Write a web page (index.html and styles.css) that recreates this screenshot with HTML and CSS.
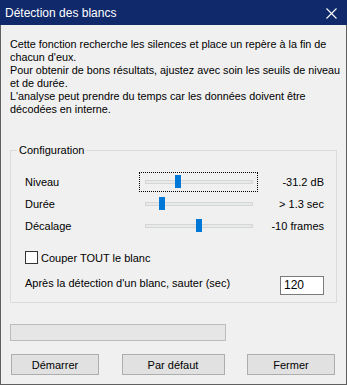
FILE: index.html
```html
<!DOCTYPE html>
<html lang="fr">
<head>
  <meta charset="UTF-8" />
  <title>Détection des blancs</title>
  <link rel="stylesheet" href="styles.css">
</head>
<body>
  <div class="window">
    <div class="titlebar">
      <span class="title">Détection des blancs</span>
      <svg class="close" width="11" height="11" viewBox="0 0 11 11">
        <path d="M0.5 0.5L10.5 10.5M10.5 0.5L0.5 10.5" stroke="#fff" stroke-width="1.1" fill="none"/>
      </svg>
    </div>

    <div class="client">
      <p class="intro">
        Cette fonction recherche les silences et place un repère à la fin de<br>
        chacun d'eux.<br>
        Pour obtenir de bons résultats, ajustez avec soin les seuils de niveau<br>
        et de durée.<br>
        L'analyse peut prendre du temps car les données doivent être<br>
        décodées en interne.
      </p>

      <fieldset class="group">
        <legend>Configuration</legend>

        <div class="sliders">
          <span class="label">Niveau</span>
          <div class="slider focus"><div class="track"><span class="thumb" style="left:29px"></span></div></div>
          <span class="value">-31.2 dB</span>

          <span class="label">Durée</span>
          <div class="slider"><div class="track"><span class="thumb" style="left:13px"></span></div></div>
          <span class="value">&gt; 1.3 sec</span>

          <span class="label">Décalage</span>
          <div class="slider"><div class="track"><span class="thumb" style="left:50px"></span></div></div>
          <span class="value">-10 frames</span>
        </div>

        <label class="check"><span class="box"></span>Couper TOUT le blanc</label>

        <div class="skip">
          <span class="skip-label">Après la détection d'un blanc, sauter (sec)</span>
          <span class="field">120</span>
        </div>
      </fieldset>

      <div class="progress"></div>

      <div class="buttons">
        <button class="btn">Démarrer</button>
        <button class="btn wide">Par défaut</button>
        <button class="btn">Fermer</button>
      </div>
    </div>
  </div>
</body>
</html>
```

FILE: styles.css
```css
body {
  margin: 0;
  font-family: "Liberation Sans", Arial, sans-serif;
  font-size: 11px;
  color: #000;
  background: #f0f0f0;
}

.window {
  width: 347px;
  height: 385px;
  display: flex;
  flex-direction: column;
}

.titlebar {
  height: 25px;
  flex: none;
  background: #10296b;
  color: #fff;
  display: flex;
  align-items: center;
  justify-content: space-between;
  padding: 0 10px 0 5px;
}

.title {
  font-size: 12px;
}

.close {
  margin-top: 2px;
}

.client {
  flex: 1;
  border: 1px solid #5f5f5f;
  border-top: 0;
  padding: 13px 9px 0;
}

.intro {
  margin: 0;
  line-height: 13px;
  font-size: 10.8px;
  white-space: nowrap;
}

.group {
  margin: 28px 0 0;
  border: 1px solid #dcdcdc;
  padding: 15px 12px 7px 6px;
}

.group legend {
  padding: 0 2px;
  line-height: 13px;
}

.sliders {
  display: grid;
  grid-template-columns: 114px 119px 1fr;
  grid-auto-rows: 20px;
  row-gap: 2px;
  align-items: center;
  margin-left: 8px;
}

.slider {
  height: 20px;
  box-sizing: border-box;
  border: 1px solid transparent;
  padding: 0 4px 0 5px;
  display: flex;
  align-items: center;
}

.slider.focus {
  border: 1px dotted #000;
}

.track {
  position: relative;
  flex: 1;
  height: 4px;
  box-sizing: border-box;
  background: #e7eaea;
  border: 1px solid #d6d6d6;
}

.thumb {
  position: absolute;
  top: -6px;
  width: 6px;
  height: 13px;
  background: #0078d7;
}

.value {
  text-align: right;
}

.check {
  display: flex;
  align-items: center;
  margin: 15px 0 0 8px;
  height: 13px;
}

.box {
  width: 13px;
  height: 13px;
  box-sizing: border-box;
  border: 1px solid #333;
  background: #fff;
  margin-right: 3px;
}

.skip {
  display: flex;
  justify-content: space-between;
  align-items: flex-start;
  margin: 12px 0 0 8px;
}

.skip-label {
  padding-top: 1px;
  line-height: 13px;
}

.field {
  width: 44px;
  height: 19px;
  box-sizing: border-box;
  border: 1px solid #7a7a7a;
  background: #fff;
  padding-left: 3px;
  line-height: 17px;
  font-size: 12px;
}

.progress {
  margin-top: 21px;
  width: 216px;
  height: 17px;
  box-sizing: border-box;
  background: #e6e6e6;
  border: 1px solid #bcbcbc;
}

.buttons {
  display: flex;
  justify-content: space-between;
  margin: 13px 2px 0 1px;
}

.btn {
  width: 88px;
  height: 21px;
  box-sizing: border-box;
  border: 1px solid #adadad;
  background: #e1e1e1;
  font-family: inherit;
  font-size: 11px;
  color: #000;
  padding: 0;
}

.btn.wide {
  width: 103px;
}
```
